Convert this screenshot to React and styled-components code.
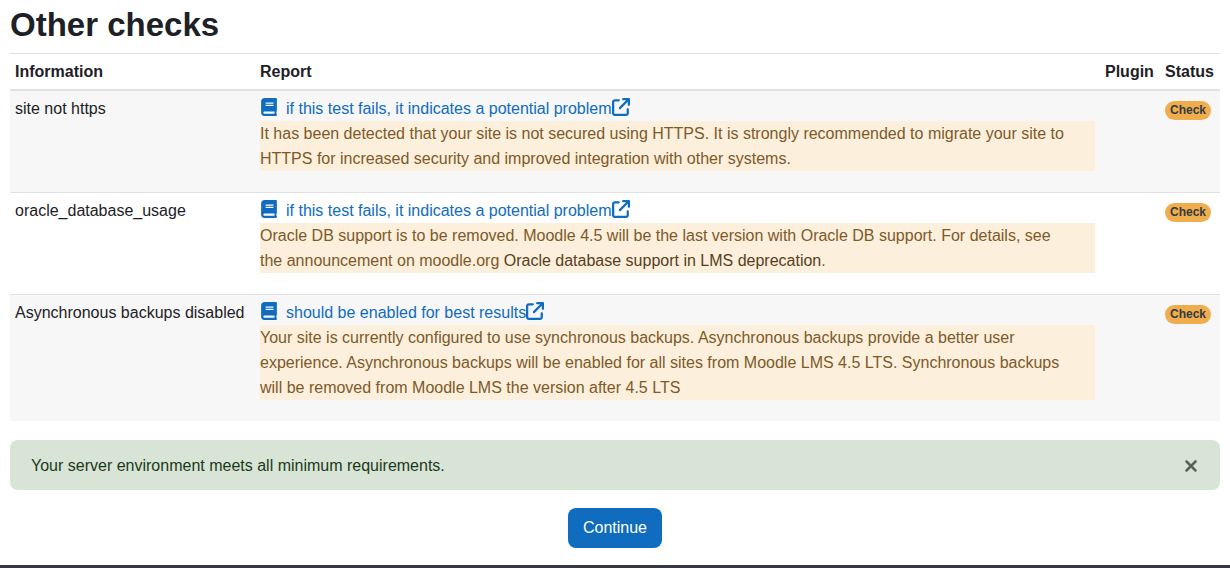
import { useState } from 'react';
import styled, { createGlobalStyle } from 'styled-components';
import { FaBook } from 'react-icons/fa';
import { FaArrowUpRightFromSquare, FaXmark } from 'react-icons/fa6';

const GlobalStyle = createGlobalStyle`
  *, *::before, *::after {
    box-sizing: border-box;
  }
  body {
    margin: 0;
    background-color: #fff;
    color: #1d2125;
    font-family: 'Liberation Sans', Arial, sans-serif;
    font-size: 16px;
    line-height: 25px;
  }
`;

const Page = styled.main`
  padding: 4px 10px 17px;
`;

const Title = styled.h1`
  margin: 0 0 8px;
  font-size: 33px;
  font-weight: 700;
  line-height: 41px;
`;

const Table = styled.table`
  width: 100%;
  margin-bottom: 19px;
  border-collapse: separate;
  border-spacing: 0;
`;

const HeadCell = styled.th`
  width: ${(props) => props.$width || 'auto'};
  padding: 5px;
  border-top: 1px solid #dee2e6;
  border-bottom: 2px solid #dee2e6;
  text-align: left;
  white-space: nowrap;
`;

const Row = styled.tr`
  &:nth-of-type(odd) {
    background-color: #f7f7f7;
  }
  & + & > td {
    border-top: 1px solid #dee2e6;
  }
`;

const Cell = styled.td`
  padding: 5px;
  vertical-align: top;
  white-space: ${(props) => (props.$nowrap ? 'nowrap' : 'normal')};
`;

const DocLink = styled.a`
  display: flex;
  align-items: center;
  width: fit-content;
  color: #0f6cbf;
  text-decoration: none;

  svg {
    width: 18px;
    height: 18px;
    margin-bottom: 3px;
  }
  svg:first-child {
    margin-right: 8px;
  }
`;

const Warning = styled.p`
  margin: 0 0 16px;
  padding-right: 24px;
  background-color: #fcefdc;
  color: #7d5a29;

  a {
    color: #573e1c;
    text-decoration: none;
  }
`;

const Badge = styled.span`
  display: inline-block;
  padding: 3px 5px;
  border-radius: 10px;
  background-color: #f0ad4e;
  color: #343a40;
  font-size: 12px;
  font-weight: 700;
  line-height: 13px;
`;

const Alert = styled.div`
  display: flex;
  align-items: center;
  justify-content: space-between;
  min-height: 50px;
  margin-bottom: 18px;
  padding: 12px 20px 12px 21px;
  border-radius: 8px;
  background-color: #d7e4d6;
  color: #1c3a1a;
`;

const CloseButton = styled.button`
  display: flex;
  padding: 2px 0 0;
  border: 0;
  background: none;
  color: #565b56;
  font-size: 18px;
  cursor: pointer;

  svg {
    stroke: currentColor;
    stroke-width: 12px;
  }
`;

const Actions = styled.div`
  display: flex;
  justify-content: center;
`;

const Button = styled.button`
  padding: 8px 15px;
  border: 0;
  border-radius: 8px;
  background-color: #0f6cbf;
  color: #fff;
  font: inherit;
  line-height: 24px;
  cursor: pointer;
`;

const Footer = styled.footer`
  border-top: 3px solid #343a40;
`;

const checks = [
  {
    info: 'site not https',
    link: 'if this test fails, it indicates a potential problem',
    report:
      'It has been detected that your site is not secured using HTTPS. It is strongly recommended to migrate your site to HTTPS for increased security and improved integration with other systems.',
  },
  {
    info: 'oracle_database_usage',
    link: 'if this test fails, it indicates a potential problem',
    report: (
      <>
        Oracle DB support is to be removed. Moodle 4.5 will be the last version
        with Oracle DB support. For details, see the announcement on moodle.org{' '}
        <a href="#oracle">Oracle database support in LMS deprecation</a>.
      </>
    ),
  },
  {
    info: 'Asynchronous backups disabled',
    link: 'should be enabled for best results',
    report:
      'Your site is currently configured to use synchronous backups. Asynchronous backups provide a better user experience. Asynchronous backups will be enabled for all sites from Moodle LMS 4.5 LTS. Synchronous backups will be removed from Moodle LMS the version after 4.5 LTS',
  },
];

const App = () => {
  const [showAlert, setShowAlert] = useState(true);

  return (
    <>
      <GlobalStyle />
      <Page>
        <Title>Other checks</Title>
        <Table>
          <thead>
            <tr>
              <HeadCell $width="245px">Information</HeadCell>
              <HeadCell>Report</HeadCell>
              <HeadCell $width="60px">Plugin</HeadCell>
              <HeadCell $width="60px">Status</HeadCell>
            </tr>
          </thead>
          <tbody>
            {checks.map((check) => (
              <Row key={check.info}>
                <Cell $nowrap>{check.info}</Cell>
                <Cell>
                  <DocLink href="#docs">
                    <FaBook />
                    {check.link}
                    <FaArrowUpRightFromSquare />
                  </DocLink>
                  <Warning>{check.report}</Warning>
                </Cell>
                <Cell />
                <Cell>
                  <Badge>Check</Badge>
                </Cell>
              </Row>
            ))}
          </tbody>
        </Table>
        {showAlert && (
          <Alert role="alert">
            Your server environment meets all minimum requirements.
            <CloseButton aria-label="Close" onClick={() => setShowAlert(false)}>
              <FaXmark />
            </CloseButton>
          </Alert>
        )}
        <Actions>
          <Button>Continue</Button>
        </Actions>
      </Page>
      <Footer />
    </>
  );
};

export default App;
